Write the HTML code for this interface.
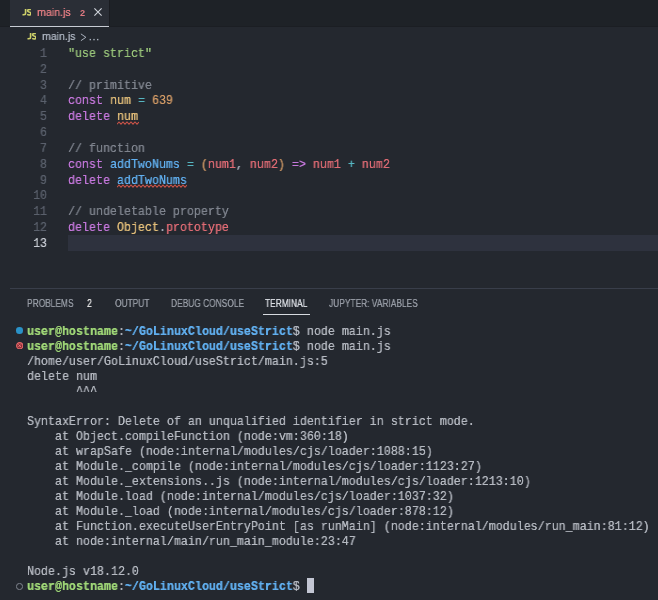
<!DOCTYPE html>
<html><head><meta charset="utf-8">
<style>
*{margin:0;padding:0;box-sizing:border-box}
.abs{will-change:transform}
html,body{width:658px;height:600px;overflow:hidden;background:#24282f}
body{position:relative;font-family:"Liberation Sans",sans-serif}
.abs{position:absolute}
#tabbar{left:0;top:0;width:658px;height:27px;background:#1e2227;border-bottom:1px solid #1b1e23}
#tab{left:10px;top:0;width:99px;height:27px;background:#2a2e36;border-bottom:1px solid #c8ccd4}
.mono{text-shadow:0 0 0.6px currentColor;font-family:"Liberation Mono",monospace;font-size:12.4px;white-space:pre;transform:scaleX(0.9409);transform-origin:0 0}
#gutter{left:0;top:47px;width:50px;text-align:right;line-height:15.833px;color:#5a606c}
#code{left:68px;top:47px;line-height:15.833px;color:#abb2bf}
#hl{left:68px;top:235px;width:590px;height:16px;background:#2e323e}
.k{color:#c678dd}.s{color:#98c379}.c{color:#7f848e}.v{color:#e5c07b}.o{color:#56b6c2}
.n{color:#d19a66}.r{color:#e06c75}.f{color:#61afef}.p{color:#abb2bf}.y{color:#e5c07b}
#pborder{left:10px;top:288px;width:648px;height:1px;background:#393e4a}
.ptab{text-shadow:0 0 0.4px currentColor;top:298px;font-size:10px;color:#959aa3;letter-spacing:0px;transform:scaleX(0.838);transform-origin:0 0;white-space:nowrap;line-height:12px}
#term{left:27px;top:324.7px;line-height:15px;color:#b6bac2}
.g{font-weight:bold;color:#a0d878}
.b{color:#61afef;font-weight:bold}
</style></head><body>
<div id="tabbar" class="abs"></div>
<div id="tab" class="abs"></div>
<div class="abs" style="left:109px;top:0;width:1px;height:27px;background:#1a1c21"></div>
<svg class="abs" style="left:22.1px;top:8.6px" width="9.4" height="6.6" viewBox="0 0 9.4 6.6"><path d="M3.6 0.1V4.1Q3.6 5.8 2.0 5.8Q1.1 5.8 0.6 5.3" stroke="#cdd06a" stroke-width="1.65" fill="none"/><path d="M8.7 1.0Q8.1 0.5 7.2 0.5Q5.6 0.5 5.6 1.7Q5.6 2.7 7.1 3.1Q8.8 3.5 8.8 4.6Q8.8 6.0 7.1 6.0Q5.9 6.0 5.2 5.3" stroke="#cdd06a" stroke-width="1.55" fill="none"/></svg>
<div class="abs" style="left:37px;top:5.5px;font-size:11px;line-height:13px;color:#e27d82;text-shadow:0 0 0.5px currentColor;transform:scaleX(0.97);transform-origin:0 0">main.js</div>
<div class="abs" style="left:80.3px;top:7.5px;font-size:9.2px;line-height:10px;font-weight:bold;color:#e07a82">2</div>
<svg class="abs" style="left:93.5px;top:8.3px" width="8" height="8" viewBox="0 0 8 8"><path d="M0.4 0.4L7.6 7.6M7.6 0.4L0.4 7.6" stroke="#d0d4dc" stroke-width="1.1"/></svg>
<!-- breadcrumbs -->
<svg class="abs" style="left:26.7px;top:32.8px" width="9.4" height="6.6" viewBox="0 0 9.4 6.6"><path d="M3.6 0.1V4.1Q3.6 5.8 2.0 5.8Q1.1 5.8 0.6 5.3" stroke="#cdd06a" stroke-width="1.65" fill="none"/><path d="M8.7 1.0Q8.1 0.5 7.2 0.5Q5.6 0.5 5.6 1.7Q5.6 2.7 7.1 3.1Q8.8 3.5 8.8 4.6Q8.8 6.0 7.1 6.0Q5.9 6.0 5.2 5.3" stroke="#cdd06a" stroke-width="1.55" fill="none"/></svg>
<div class="abs" style="left:42px;top:29.5px;font-size:11px;line-height:13px;color:#a9b0bc;text-shadow:0 0 0.5px currentColor;white-space:nowrap;transform:scaleX(0.96);transform-origin:0 0">main.js</div>
<svg class="abs" style="left:80px;top:33px" width="20" height="10" viewBox="0 0 20 10"><path d="M0.9 0.9L5.9 4.3L0.9 7.7" stroke="#a9b0bc" stroke-width="1" fill="none"/><rect x="9.6" y="5.9" width="1.4" height="1.4" fill="#a9b0bc"/><rect x="13.3" y="5.9" width="1.4" height="1.4" fill="#a9b0bc"/><rect x="17" y="5.9" width="1.4" height="1.4" fill="#a9b0bc"/></svg>

<div id="hl" class="abs"></div>
<div id="gutter" class="abs mono">1
2
3
4
5
6
7
8
9
10
11
12
<span style="color:#c8ccd4">13</span></div>
<div id="code" class="abs mono"><span class="s">"use strict"</span>

<span class="c">// primitive</span>
<span class="k">const</span> <span class="v">num</span> <span class="o">=</span> <span class="n">639</span>
<span class="k">delete</span> <span class="v">num</span>

<span class="c">// function</span>
<span class="k">const</span> <span class="f">addTwoNums</span> <span class="o">=</span> <span class="n">(</span><span class="r">num1</span><span class="p">,</span> <span class="r">num2</span><span class="n">)</span> <span class="k">=&gt;</span> <span class="r">num1</span> <span class="o">+</span> <span class="r">num2</span>
<span class="k">delete</span> <span class="f">addTwoNums</span>

<span class="c">// undeletable property</span>
<span class="k">delete</span> <span class="y">Object</span><span class="p">.</span><span class="r">prototype</span>
</div>
<!-- squiggles -->
<svg class="abs" style="left:117px;top:120.5px" width="22" height="4" viewBox="0 0 22 4"><path d="M0 3.2 L2 1.0 L4 3.2 L6 1.0 L8 3.2 L10 1.0 L12 3.2 L14 1.0 L16 3.2 L18 1.0 L20 3.2 L22 1.0" stroke="#cf5549" stroke-width="1.05" fill="none"/></svg>
<svg class="abs" style="left:117px;top:183.5px" width="70" height="4" viewBox="0 0 70 4"><path d="M0 3.2 L2 1.0 L4 3.2 L6 1.0 L8 3.2 L10 1.0 L12 3.2 L14 1.0 L16 3.2 L18 1.0 L20 3.2 L22 1.0 L24 3.2 L26 1.0 L28 3.2 L30 1.0 L32 3.2 L34 1.0 L36 3.2 L38 1.0 L40 3.2 L42 1.0 L44 3.2 L46 1.0 L48 3.2 L50 1.0 L52 3.2 L54 1.0 L56 3.2 L58 1.0 L60 3.2 L62 1.0 L64 3.2 L66 1.0 L68 3.2 L70 1.0" stroke="#cf5549" stroke-width="1.05" fill="none"/></svg>

<div id="pborder" class="abs"></div>
<div class="abs ptab" style="left:27px">PROBLEMS</div>
<div class="abs ptab" style="left:86.5px;top:297px;color:#e6e6e6;font-size:10.5px">2</div>
<div class="abs ptab" style="left:115px">OUTPUT</div>
<div class="abs ptab" style="left:171px">DEBUG CONSOLE</div>
<div class="abs ptab" style="left:265px;color:#d7dae0">TERMINAL</div>
<div class="abs" style="left:263px;top:314px;width:47px;height:1px;background:#d7dae0"></div>
<div class="abs ptab" style="left:329px">JUPYTER: VARIABLES</div>

<div class="abs" style="left:15.8px;top:327.1px;width:6.6px;height:6.6px;border-radius:50%;background:#2a92c8"></div>
<svg class="abs" style="left:15.5px;top:341.8px" width="7.4" height="7.4" viewBox="0 0 7.4 7.4"><circle cx="3.7" cy="3.7" r="3.1" fill="#902e36" stroke="#e46a6a" stroke-width="1.1"/><path d="M2.4 2.4L5.0 5.0M5.0 2.4L2.4 5.0" stroke="#ee8080" stroke-width="0.9"/></svg>
<div class="abs" style="left:16px;top:582.5px;width:6.5px;height:6.5px;border-radius:50%;border:1px solid #7f848e"></div>

<div id="term" class="abs mono"><span class="g">user@hostname</span>:<span class="b">~/GoLinuxCloud/useStrict</span>$ node main.js
<span class="g">user@hostname</span>:<span class="b">~/GoLinuxCloud/useStrict</span>$ node main.js
/home/user/GoLinuxCloud/useStrict/main.js:5
delete num
       ^^^

SyntaxError: Delete of an unqualified identifier in strict mode.
    at Object.compileFunction (node:vm:360:18)
    at wrapSafe (node:internal/modules/cjs/loader:1088:15)
    at Module._compile (node:internal/modules/cjs/loader:1123:27)
    at Module._extensions..js (node:internal/modules/cjs/loader:1213:10)
    at Module.load (node:internal/modules/cjs/loader:1037:32)
    at Module._load (node:internal/modules/cjs/loader:878:12)
    at Function.executeUserEntryPoint [as runMain] (node:internal/modules/run_main:81:12)
    at node:internal/main/run_main_module:23:47

Node.js v18.12.0
<span class="g">user@hostname</span>:<span class="b">~/GoLinuxCloud/useStrict</span>$ </div>
<div class="abs" style="left:307px;top:578px;width:7px;height:15px;background:#c3c6d3"></div>
</body></html>
